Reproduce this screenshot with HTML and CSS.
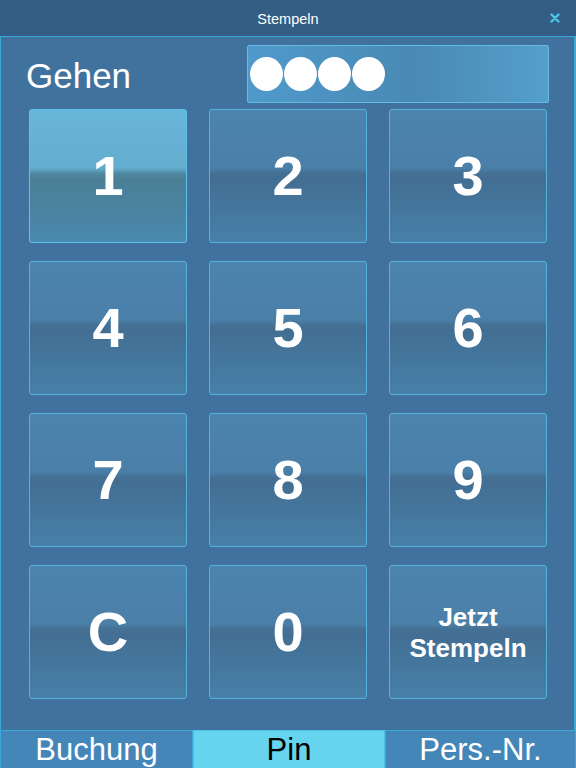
FILE: index.html
```html
<!DOCTYPE html>
<html lang="de">
<head>
<meta charset="utf-8">
<title>Stempeln</title>
<link rel="stylesheet" href="styles.css">
</head>
<body>
<div class="app">
  <header class="header">
    <span></span>
    <span class="title">Stempeln</span>
    <span class="close" aria-label="Schließen">
      <svg width="10" height="10" viewBox="0 0 10 10"><path d="M1.5 1.5 L8.5 8.5 M8.5 1.5 L1.5 8.5" stroke="#4cc6ee" stroke-width="2.4" stroke-linecap="round"/></svg>
    </span>
  </header>
  <main class="panel">
    <div class="toprow">
      <div class="mode">Gehen</div>
      <div class="pinfield">
        <span class="dot"></span><span class="dot"></span><span class="dot"></span><span class="dot"></span>
      </div>
    </div>
    <div class="pad">
      <button class="key active">1</button>
      <button class="key">2</button>
      <button class="key">3</button>
      <button class="key">4</button>
      <button class="key">5</button>
      <button class="key">6</button>
      <button class="key">7</button>
      <button class="key">8</button>
      <button class="key">9</button>
      <button class="key">C</button>
      <button class="key">0</button>
      <button class="key small">Jetzt<br>Stempeln</button>
    </div>
  </main>
  <nav class="tabs">
    <div class="tab">Buchung</div>
    <div class="tab current">Pin</div>
    <div class="tab">Pers.-Nr.</div>
  </nav>
</div>
</body>
</html>
```
FILE: styles.css
```css
html, body {
  margin: 0;
  padding: 0;
}
body {
  width: 576px;
  height: 768px;
  overflow: hidden;
  background: #41729d;
  font-family: "Liberation Sans", Arial, sans-serif;
}
.app {
  width: 576px;
  height: 768px;
  display: flex;
  flex-direction: column;
}
.header {
  height: 36px;
  flex: none;
  background: #335d84;
  display: grid;
  grid-template-columns: 1fr auto 1fr;
  align-items: center;
  color: #fff;
}
.title {
  font-size: 14.5px;
  padding-top: 1px;
}
.close {
  justify-self: end;
  margin-right: 16px;
  display: flex;
  padding-bottom: 1px;
}
.panel {
  box-sizing: border-box;
  height: 694px;
  flex: none;
  border: 1px solid #3aa8d8;
  border-bottom: none;
  border-right-width: 2px;
  background: #41729d;
  padding: 8px 0 0 28px;
  display: flex;
  flex-direction: column;
  gap: 6px;
}
.toprow {
  height: 58px;
  display: flex;
  align-items: center;
}
.mode {
  width: 221px;
  margin-left: -3px;
  color: #fff;
  font-size: 35px;
  padding-top: 3px;
}
.pinfield {
  box-sizing: border-box;
  width: 302px;
  height: 58px;
  border: 1px solid #62bde6;
  border-radius: 2px;
  background: linear-gradient(to right, #4f9acb 0%, #4a89b5 55%, #549fcc 100%);
  display: flex;
  align-items: center;
  padding-left: 2px;
}
.dot {
  width: 33px;
  height: 34px;
  border-radius: 50%;
  background: #fff;
  margin-right: 1px;
  flex: none;
}
.pad {
  display: grid;
  grid-template-columns: repeat(3, 158px);
  grid-template-rows: repeat(4, 134px);
  column-gap: 22px;
  row-gap: 18px;
}
.key {
  box-sizing: border-box;
  margin: 0;
  padding: 0;
  border: 1px solid #55b2dc;
  border-radius: 3px;
  background: linear-gradient(to bottom, #4c84ae 0%, #4a7fa8 44%, #466f94 48%, #436e93 52%, #4579a0 80%, #4780a8 100%);
  color: #fff;
  font-family: "Liberation Sans", Arial, sans-serif;
  font-weight: bold;
  font-size: 56px;
  line-height: 1;
  display: flex;
  align-items: center;
  justify-content: center;
  text-align: center;
}
.key.active {
  border-color: #5fc2ec;
  background: linear-gradient(to bottom, #68b6d9 0%, #64adcf 44%, #4f8aa2 48%, #4a7f96 52%, #4a84a2 80%, #4a8ab0 100%);
}
.key.small {
  font-size: 26px;
  line-height: 31px;
  padding-top: 2px;
}
.tabs {
  flex: none;
  height: 38px;
  display: grid;
  grid-template-columns: 193px 192px 191px;
  overflow: hidden;
}
.tab {
  box-sizing: border-box;
  height: 40px;
  border: 1px solid #3aa9d9;
  border-bottom: none;
  background: #4586b9;
  color: #fff;
  font-size: 31px;
  line-height: 38px;
  text-align: center;
  overflow: hidden;
}
.tab.current {
  background: #66d3ef;
  color: #000;
  border-color: #4cc0e6;
}
```
